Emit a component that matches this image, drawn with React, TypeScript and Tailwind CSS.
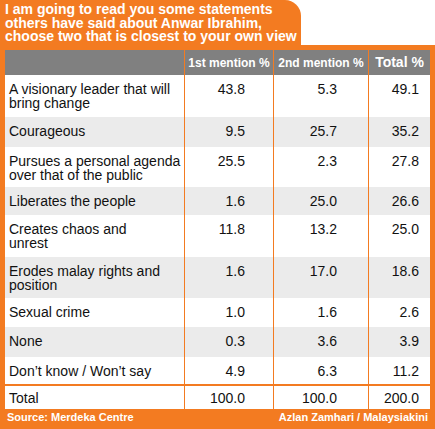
const rows = [
  { label: ["A visionary leader that will", "bring change"], a: "43.8", b: "5.3", t: "49.1", h: "h-[42px]", bg: "bg-white" },
  { label: ["Courageous"], a: "9.5", b: "25.7", t: "35.2", h: "h-[30px]", bg: "bg-[#ebebeb]" },
  { label: ["Pursues a personal agenda", "over that of the public"], a: "25.5", b: "2.3", t: "27.8", h: "h-[40px]", bg: "bg-white" },
  { label: ["Liberates the people"], a: "1.6", b: "25.0", t: "26.6", h: "h-[28px]", bg: "bg-[#ebebeb]" },
  { label: ["Creates chaos and", "unrest"], a: "11.8", b: "13.2", t: "25.0", h: "h-[42px]", bg: "bg-white" },
  { label: ["Erodes malay rights and", "position"], a: "1.6", b: "17.0", t: "18.6", h: "h-[41px]", bg: "bg-[#ebebeb]" },
  { label: ["Sexual crime"], a: "1.0", b: "1.6", t: "2.6", h: "h-[29px]", bg: "bg-white" },
  { label: ["None"], a: "0.3", b: "3.6", t: "3.9", h: "h-[30px]", bg: "bg-[#ebebeb]" },
  { label: ["Don\u2019t know / Won\u2019t say"], a: "4.9", b: "6.3", t: "11.2", h: "h-[27px]", bg: "bg-white" },
];

const grid = "grid grid-cols-[180px_89px_95px_61px]";

export default function App() {
  return (
    <div className="w-[435px] h-[429px] bg-white overflow-hidden" style={{ fontFamily: "'Liberation Sans', Arial, sans-serif" }}>
      <div className="w-[301px] h-[45px] bg-[#f37b21] rounded-tr-[16px] pl-[5px] pt-[3px] text-white font-bold text-[14px] leading-[13.5px]">
        <div>I am going to read you some statements</div>
        <div>others have said about Anwar Ibrahim,</div>
        <div>choose two that is closest to your own view</div>
      </div>
      <div className="bg-[#f37b21] px-[5px] pt-[5px] h-[384px] flex flex-col">
        <div className={`${grid} h-[25px] bg-[#808080] text-white font-bold items-center`}>
          <div className="h-full border-r border-[#f37b21]" />
          <div className="h-full border-r border-[#f37b21] flex items-center justify-center text-[12px]">1st mention %</div>
          <div className="h-full border-r border-[#f37b21] flex items-center justify-center text-[12px]">2nd mention %</div>
          <div className="h-full flex items-center justify-center text-[14px]">Total %</div>
        </div>
        {rows.map((r) => (
          <div key={r.label[0]} className={`${grid} ${r.h} ${r.bg} text-[14px] leading-[14px] text-[#111]`}>
            <div className="border-r border-[#f37b21] pl-[4px] pt-[7px]">
              {r.label.map((l) => (
                <div key={l}>{l}</div>
              ))}
            </div>
            <div className="border-r border-[#f37b21] text-right pr-[28px] pt-[7px]">{r.a}</div>
            <div className="border-r border-[#f37b21] text-right pr-[31px] pt-[7px]">{r.b}</div>
            <div className="text-right pr-[11px] pt-[7px]">{r.t}</div>
          </div>
        ))}
        <div className={`${grid} h-[25px] bg-white border-t-2 border-[#f37b21] text-[14px] leading-[14px] text-[#111]`}>
          <div className="border-r border-[#f37b21] pl-[4px] pt-[5px]">Total</div>
          <div className="border-r border-[#f37b21] text-right pr-[28px] pt-[5px]">100.0</div>
          <div className="border-r border-[#f37b21] text-right pr-[31px] pt-[5px]">100.0</div>
          <div className="text-right pr-[11px] pt-[5px]">200.0</div>
        </div>
        <div className="flex justify-between items-center h-[16px] pl-[2px] pr-[2px] text-white font-bold text-[11px] leading-[11px]">
          <span>Source: Merdeka Centre</span>
          <span>Azlan Zamhari / Malaysiakini</span>
        </div>
      </div>
    </div>
  );
}
